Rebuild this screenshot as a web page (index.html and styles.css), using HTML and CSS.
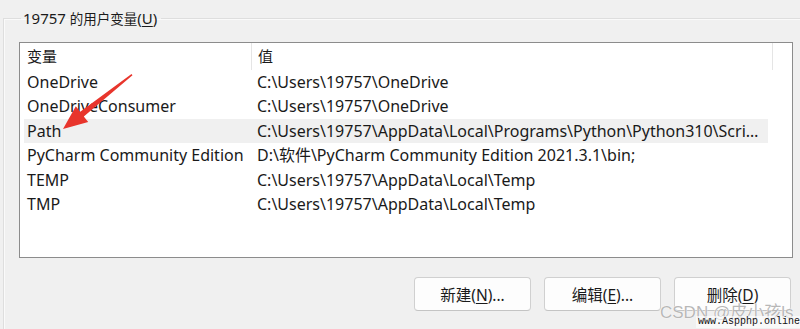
FILE: index.html
```html
<!DOCTYPE html>
<html lang="zh-CN">
<head>
    <meta charset="UTF-8">
    <title>用户变量</title>
    <link rel="stylesheet" href="styles.css">
</head>
<body>
    <fieldset class="group">
        <legend>19757 <span class="cjk">的用户变量</span>(<u>U</u>)</legend>

        <div class="list">
            <div class="row head">
                <div class="cell name">变量</div>
                <div class="cell value">值</div>
            </div>
            <div class="row">
                <div class="cell name">OneDrive</div>
                <div class="cell value">C:\Users\19757\OneDrive</div>
            </div>
            <div class="row">
                <div class="cell name">OneDriveConsumer</div>
                <div class="cell value">C:\Users\19757\OneDrive</div>
            </div>
            <div class="row selected">
                <div class="cell name">Path</div>
                <div class="cell value">C:\Users\19757\AppData\Local\Programs\Python\Python310\Scripts\;C:\Users\19757\AppData\Local\Programs\Python\Python310\</div>
            </div>
            <div class="row">
                <div class="cell name">PyCharm Community Edition</div>
                <div class="cell value">D:\软件\PyCharm Community Edition 2021.3.1\bin;</div>
            </div>
            <div class="row">
                <div class="cell name">TEMP</div>
                <div class="cell value">C:\Users\19757\AppData\Local\Temp</div>
            </div>
            <div class="row">
                <div class="cell name">TMP</div>
                <div class="cell value">C:\Users\19757\AppData\Local\Temp</div>
            </div>
        </div>

        <div class="buttons">
            <button>新建(<u>N</u>)...</button>
            <button>编辑(<u>E</u>)...</button>
            <button>删除(<u>D</u>)</button>
        </div>
    </fieldset>

    <!-- 截图上的红色箭头 -->
    <svg class="arrow" width="800" height="329" viewBox="0 0 800 329">
        <path d="M63,129 L75.8,106.3 L80.2,111.8 L131.5,74.1 L132.5,75.3 L83.8,116.6 L88.2,122.1 Z" fill="#e8352c"/>
    </svg>

    <div class="watermark">CSDN @皮小孩ls</div>
    <div class="site">www.Aspphp.online</div>
</body>
</html>
```

FILE: styles.css
```css
html, body {
    margin: 0;
    padding: 0;
}
body {
    width: 800px;
    height: 329px;
    overflow: hidden;
    position: relative;
    background-color: #f0f0f0;
    font-family: 'Noto Sans', 'Noto Sans CJK SC', sans-serif;
    font-size: 16px;
    color: #1a1a1a;
}
.group {
    margin: 9px 0 0 3px;
    padding: 14px 0 0 15px;
    width: 820px;
    height: 320px;
    border: 1px solid #dedede;
    border-right: none;
    border-bottom: none;
    box-shadow: inset 1px 1px 0 #fafafa;
    box-sizing: border-box;
}
.group legend {
    margin-left: 2px;
    padding: 0 4px 0 2px;
    font-size: 15px;
    line-height: 18px;
    color: #1b1b1b;
}
.group legend .cjk {
    font-size: 13.5px;
}
.group u {
    text-underline-offset: 2px;
}
.list {
    width: 774px;
    height: 216px;
    box-sizing: border-box;
    background-color: white;
    border: 1px solid #8c8c8c;
    padding-left: 4px;
}
.row {
    display: flex;
    width: 744px;
    height: 24.4px;
    line-height: 24.4px;
    white-space: nowrap;
}
.row.head {
    height: 27px;
    line-height: 27px;
    margin-left: -4px;
    padding-left: 4px;
    width: 748px;
    border-right: 1px solid #e5e5e5;
    font-size: 15px;
}
.row.selected {
    background-color: #f0f0f0;
}
.cell {
    overflow: hidden;
    text-overflow: ellipsis;
}
.cell.name {
    width: 227px;
    padding-left: 3px;
    box-sizing: border-box;
}
.cell.value {
    flex: 1;
    padding-left: 6px;
    padding-right: 8px;
}
.head .cell.value {
    border-left: 1px solid #e5e5e5;
}
.buttons {
    display: flex;
    justify-content: flex-end;
    gap: 13px;
    width: 772px;
    margin-top: 19px;
}
.buttons button {
    width: 117px;
    height: 34px;
    background-color: #fdfdfd;
    border: 1px solid #d0d0d0;
    border-bottom-color: #c4c4c4;
    border-radius: 4px;
    font-family: inherit;
    font-size: 15.5px;
    color: #1a1a1a;
    padding: 0;
}
.arrow {
    position: absolute;
    left: 0;
    top: 0;
    pointer-events: none;
}
.watermark {
    position: absolute;
    left: 660px;
    top: 298px;
    font-family: 'Liberation Sans', 'Noto Sans CJK SC', sans-serif;
    font-size: 17px;
    color: rgba(160, 160, 160, 0.75);
    text-shadow: 0 0 1px #fff, 0 0 1px #fff;
}
.site {
    position: absolute;
    right: 0;
    top: 316px;
    font-family: 'Liberation Mono', monospace;
    font-size: 10px;
    line-height: 12px;
    color: #111;
    background-color: rgba(255, 255, 255, 0.6);
    padding-left: 2px;
}
```
